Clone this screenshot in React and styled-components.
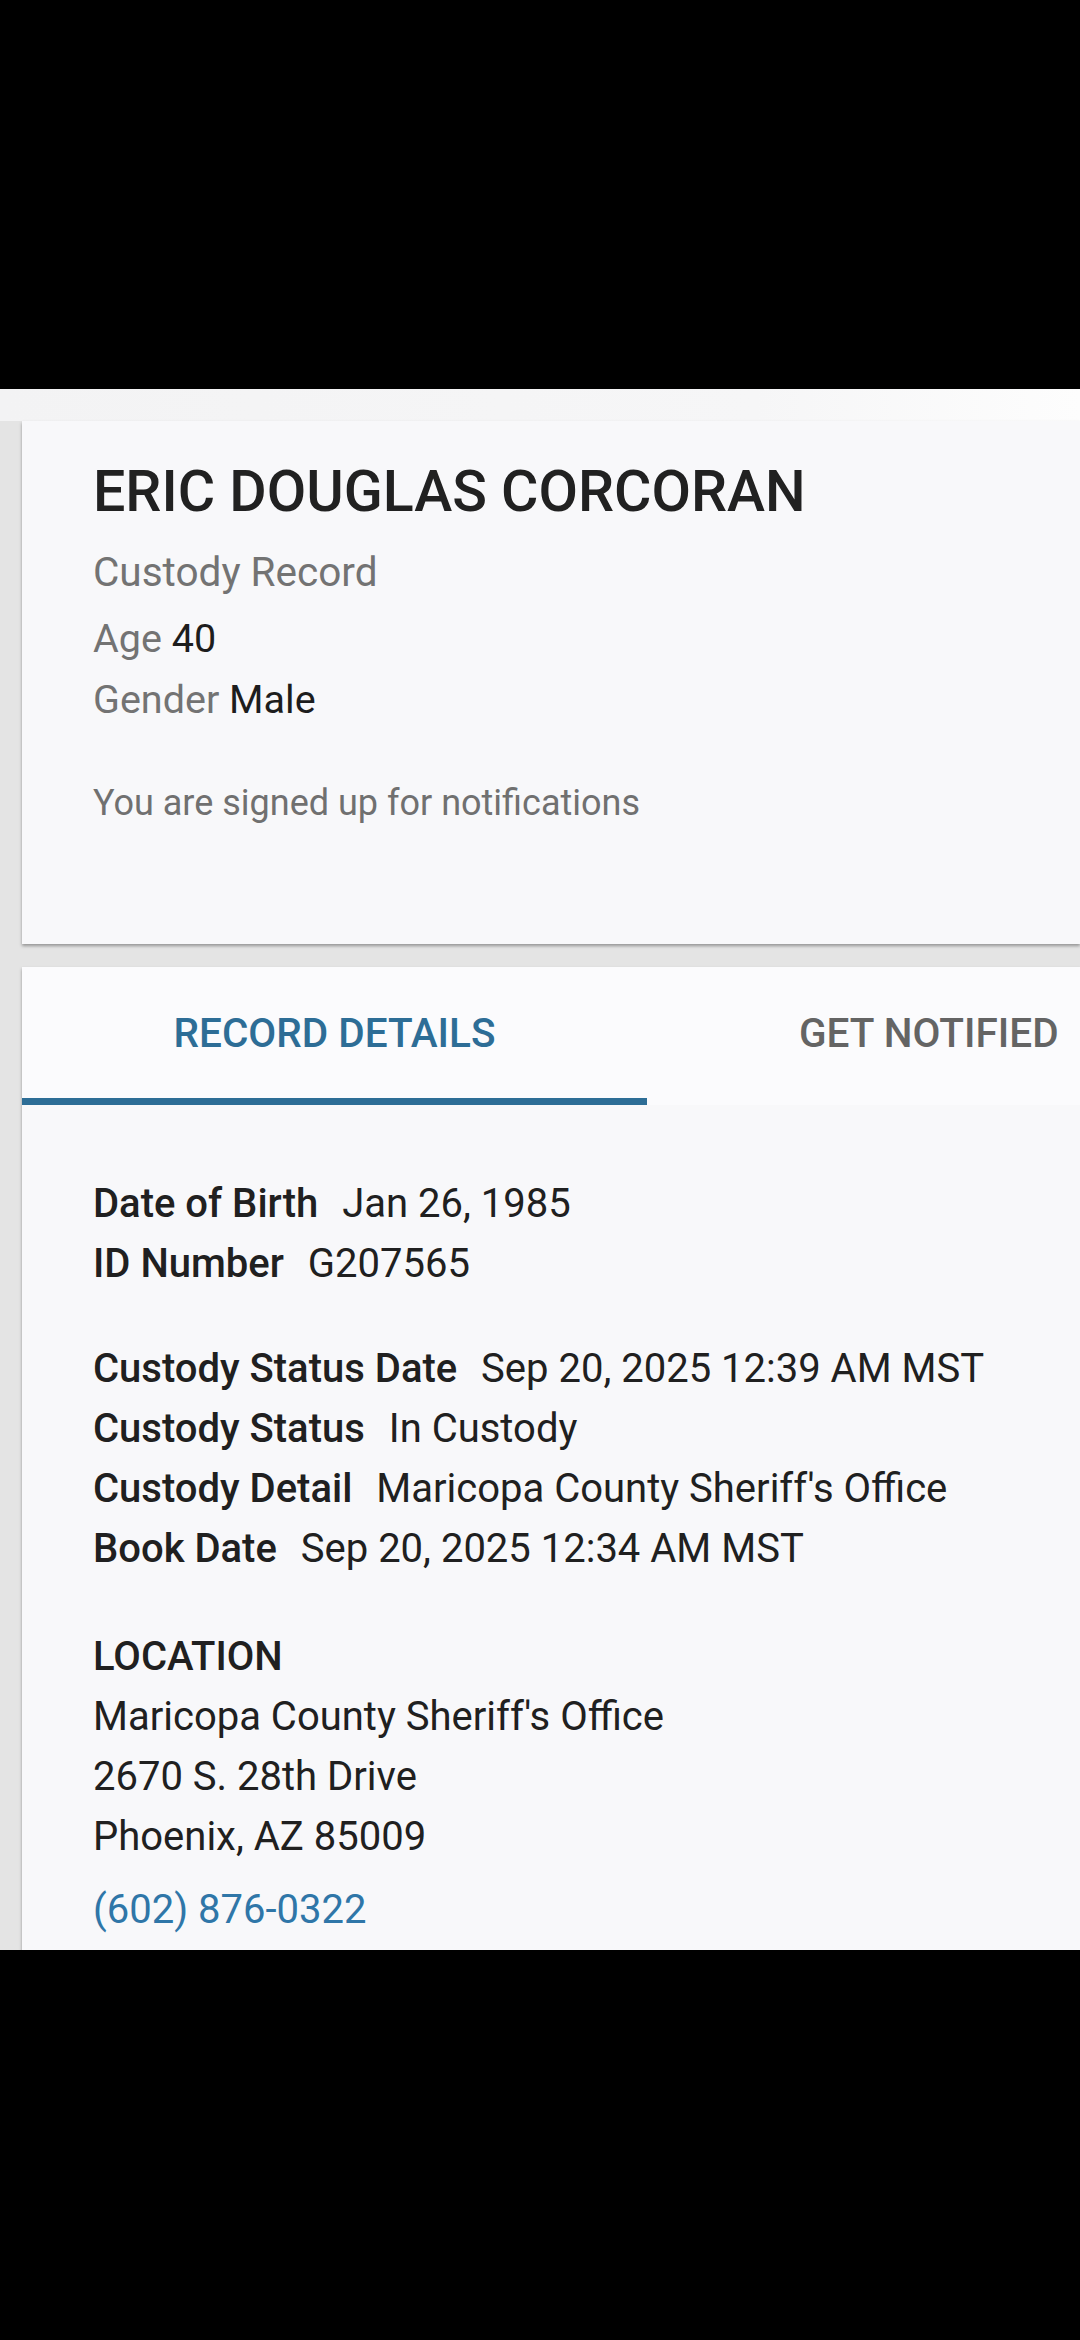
import React from "react";
import styled, { createGlobalStyle } from "styled-components";

const Global = createGlobalStyle`
  html, body { margin: 0; padding: 0; background: #000; }
  body { font-family: Roboto, "Noto Sans", "Liberation Sans", sans-serif; }
  * { box-sizing: border-box; }
`;

const Phone = styled.div`
  width: 1080px;
  height: 2340px;
  background: #000;
  display: flex;
  flex-direction: column;
  overflow: hidden;
`;

const BlackBand = styled.div`
  height: ${(p) => p.$h}px;
  flex: none;
  background: #000;
`;

const Screen = styled.div`
  height: 1561px;
  flex: none;
  background: #e4e4e4;
  display: flex;
  flex-direction: column;
  overflow: hidden;
`;

const TopStrip = styled.div`
  height: 32px;
  flex: none;
  background: linear-gradient(90deg, #f3f3f4 0%, #f6f6f7 70%, #fdfdfd 100%);
`;

const Column = styled.div`
  padding-left: 22px;
  display: flex;
  flex-direction: column;
  gap: 23px;
`;

const Card = styled.section`
  background: #f8f8fa;
  box-shadow: 0 2px 3px rgba(0, 0, 0, 0.35);
  height: ${(p) => (p.$h ? `${p.$h}px` : "auto")};
  display: flex;
  flex-direction: column;
`;

const Header = styled.div`
  padding: 36px 0 0 71px;
  display: flex;
  flex-direction: column;
`;

const Name = styled.h1`
  margin: 0;
  font-size: 57.3px;
  line-height: 70px;
  font-weight: 500;
  color: #212121;
`;

const Sub = styled.div`
  margin: 15px 0 5px;
  font-size: 40.5px;
  line-height: 61px;
  color: #737373;
`;

const Meta = styled.div`
  font-size: 39.5px;
  line-height: 61px;
  color: #737373;
`;

const MetaValue = styled.span`
  color: #1d1d1d;
`;

const Notice = styled.div`
  margin-top: 43px;
  font-size: 36px;
  line-height: 61px;
  color: #707070;
`;

const Tabs = styled.div`
  display: flex;
  height: 138px;
  background: #fbfbfd;
`;

const Tab = styled.div`
  width: 625px;
  flex: none;
  display: flex;
  align-items: flex-start;
  justify-content: ${(p) => (p.$active ? "center" : "flex-start")};
  padding-top: 42px;
  padding-left: ${(p) => (p.$active ? 0 : 152)}px;
  font-size: 40.5px;
  line-height: 48px;
  font-weight: 500;
  color: ${(p) => (p.$active ? "#2d6d96" : "#646464")};
  border-bottom: 7px solid ${(p) => (p.$active ? "#2d6d96" : "transparent")};
`;

const Details = styled.div`
  padding: 69px 0 30px 71px;
  display: flex;
  flex-direction: column;
`;

const Group = styled.div`
  display: flex;
  flex-direction: column;
  margin-top: ${(p) => p.$mt || 0}px;
`;

const Row = styled.div`
  font-size: 40px;
  line-height: 60px;
  color: #202020;
  white-space: nowrap;
`;

const Label = styled.span`
  font-weight: 500;
  margin-right: 14px;
`;

const Heading = styled.div`
  font-size: 40px;
  line-height: 60px;
  font-weight: 500;
  color: #202020;
`;

const PhoneLink = styled.a`
  margin-top: 13px;
  font-size: 40px;
  line-height: 60px;
  color: #2f76a8;
  text-decoration: none;
`;

const rows1 = [
  ["Date of Birth", "Jan 26, 1985"],
  ["ID Number", "G207565"],
];
const rows2 = [
  ["Custody Status Date", "Sep 20, 2025 12:39 AM MST"],
  ["Custody Status", "In Custody"],
  ["Custody Detail", "Maricopa County Sheriff's Office"],
  ["Book Date", "Sep 20, 2025 12:34 AM MST"],
];

export default function App() {
  return (
    <Phone>
      <Global />
      <BlackBand $h={389} />
      <Screen>
        <TopStrip />
        <Column>
          <Card $h={523}>
            <Header>
              <Name>ERIC DOUGLAS CORCORAN</Name>
              <Sub>Custody Record</Sub>
              <Meta>
                Age <MetaValue>40</MetaValue>
              </Meta>
              <Meta>
                Gender <MetaValue>Male</MetaValue>
              </Meta>
              <Notice>You are signed up for notifications</Notice>
            </Header>
          </Card>
          <Card>
            <Tabs>
              <Tab $active>RECORD DETAILS</Tab>
              <Tab>GET NOTIFIED</Tab>
            </Tabs>
            <Details>
              <Group>
                {rows1.map(([l, v]) => (
                  <Row key={l}>
                    <Label>{l}</Label> {v}
                  </Row>
                ))}
              </Group>
              <Group $mt={45}>
                {rows2.map(([l, v]) => (
                  <Row key={l}>
                    <Label>{l}</Label> {v}
                  </Row>
                ))}
              </Group>
              <Group $mt={48}>
                <Heading>LOCATION</Heading>
                <Row>Maricopa County Sheriff's Office</Row>
                <Row>2670 S. 28th Drive</Row>
                <Row>Phoenix, AZ 85009</Row>
                <PhoneLink href="#">(602) 876-0322</PhoneLink>
              </Group>
            </Details>
          </Card>
        </Column>
      </Screen>
      <BlackBand $h={400} />
    </Phone>
  );
}
